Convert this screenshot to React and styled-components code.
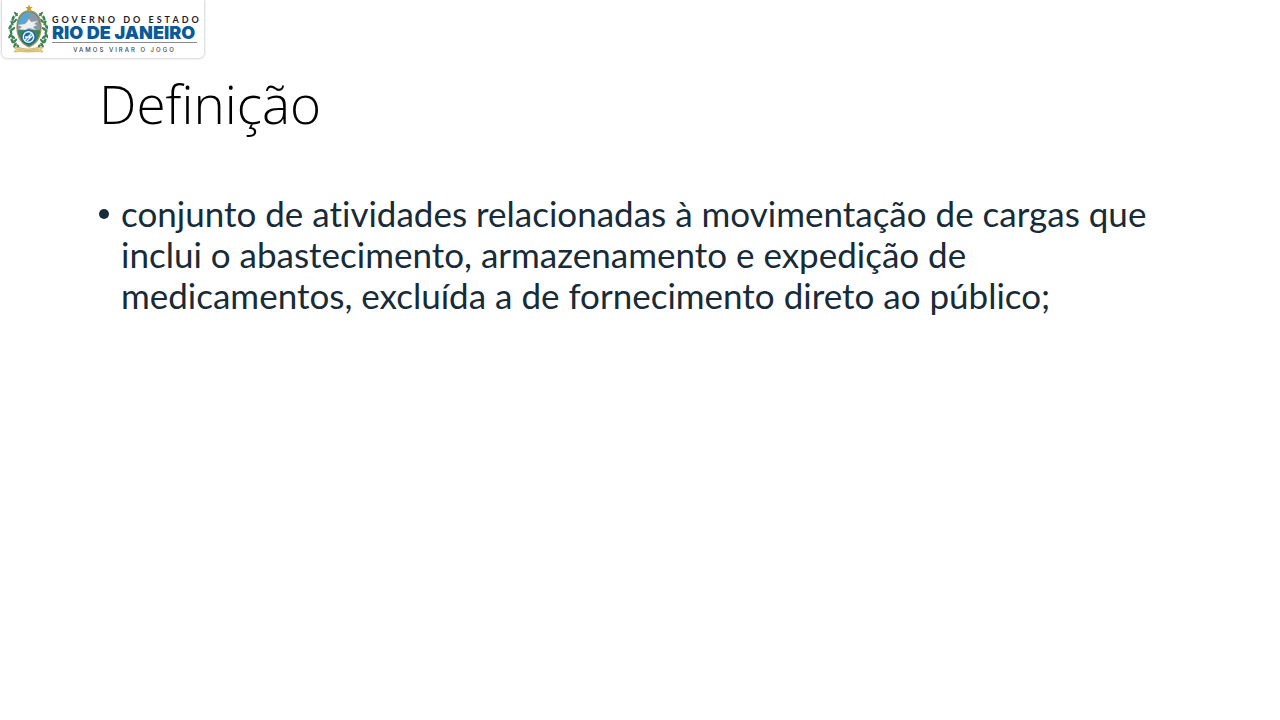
import React from "react";
import styled, { createGlobalStyle } from "styled-components";

const GlobalStyle = createGlobalStyle`
  *, *::before, *::after { box-sizing: border-box; }
  body { margin: 0; background: #fff; }
`;

const Slide = styled.div`
  min-height: 100vh;
  background: #fff;
  font-family: Lato, "Liberation Sans", sans-serif;
  font-variant-ligatures: none;
`;

const Brand = styled.header`
  display: flex;
  align-items: flex-start;
  gap: 4px;
  width: fit-content;
  height: 58px;
  margin-left: 2px;
  padding: 4px 7px 0 6px;
  background: #fff;
  border-radius: 0 0 5px 5px;
  box-shadow: 0 0 3px rgba(0, 0, 0, 0.35);
`;

const Crest = styled.svg`
  display: block;
  width: 40px;
  height: 50px;
  flex: none;
`;

const BrandText = styled.div`
  display: flex;
  flex-direction: column;
  width: 145px;
  padding-top: 10px;
  font-family: Inter, "Liberation Sans", sans-serif;
  white-space: nowrap;
`;

const Government = styled.span`
  font-family: Lato, "Liberation Sans", sans-serif;
  font-size: 9px;
  line-height: 11px;
  font-weight: 700;
  letter-spacing: 3px;
  color: #1d1d1f;
`;

const StateName = styled.strong`
  font-size: 18px;
  line-height: 15px;
  font-weight: 900;
  color: #075b99;
`;

const Motto = styled.span`
  margin-top: 2px;
  padding-top: 2px;
  border-top: 1px solid #8b8b8b;
  font-size: 6px;
  line-height: 9px;
  font-weight: 500;
  letter-spacing: 2px;
  text-align: center;
  color: #444;
`;

const Content = styled.main`
  padding: 12px 92px 0 99px;
`;

const Title = styled.h1`
  margin: 0;
  font-family: "Open Sans", "Liberation Sans", sans-serif;
  font-size: 53px;
  line-height: 68px;
  font-weight: 300;
  color: #000;
`;

const Points = styled.ul`
  margin: 55px 0 0;
  padding: 0;
  list-style: none;
  color: #172b38;
  font-size: 35px;
  line-height: 41px;
`;

const Point = styled.li`
  display: flex;
  gap: 12px;
  &::before {
    content: "";
    flex: none;
    width: 10px;
    height: 10px;
    margin-top: 16px;
    border-radius: 50%;
    background: currentColor;
  }
`;

const leaves = [
  [8, 10, -40], [5, 14, 20], [4, 19, -25], [2, 23, 25], [3, 28, -20],
  [2, 32, 30], [4, 37, -25], [7, 41, 35], [10, 43, -10], [7, 17, 45],
  [5, 25, 50], [5, 33, -50], [7, 37, 45],
];

function LaurelSide() {
  return (
    <g>
      <path d="M10 9C1 18 0 35 11 44" fill="none" stroke="#38754d" strokeWidth=".8" />
      {leaves.map(([x, y, angle]) => (
        <ellipse key={`${x}-${y}`} cx={x} cy={y} rx="1.2" ry="2.7" fill="#3c8356"
          transform={`rotate(${angle} ${x} ${y})`} />
      ))}
    </g>
  );
}

function StateCrest() {
  return (
    <Crest viewBox="0 0 40 50" role="img" aria-label="Brasão do Estado do Rio de Janeiro">
      <LaurelSide />
      <g transform="translate(41 0) scale(-1 1)"><LaurelSide /></g>
      <path d="M21 7C14 7 9 13 9 23c0 10 5 17 12 20 7-3 12-10 12-20 0-10-5-16-12-16Z"
        fill="#1e72a9" stroke="#a99544" strokeWidth="1.3" />
      <path d="M21 8c-6 0-11 6-11 14v4h22v-4C32 14 27 8 21 8Z" fill="#8997a6" />
      <path d="M10 20c1-7 5-12 11-12v5l-5 6-6 3Z" fill="#58a5cf" />
      <path d="M10 26h22c-1 7-4 12-11 16-7-4-10-9-11-16Z" fill="#3e8657" />
      <path d="m21 15 2 3 7-1-4 3 3 1-4 2 3 3-7-2-4 2-6-1 3-2-4-2 7-1 2-2Z"
        fill="#edf0ef" stroke="#c1c8ca" strokeWidth=".3" />
      <circle cx="20.5" cy="33" r="7.5" fill="#176ca7" />
      <circle cx="20.5" cy="33" r="5.2" fill="none" stroke="#f3f7f7" strokeWidth="1.4" />
      <path d="m17 36 7-7m-5 8 6-6m-8 2h6" stroke="#f3f7f7" strokeWidth="1.3" />
      <path d="m21 .5 1.1 2.4 2.7.2-2 1.7.7 2.7L21 6.1l-2.4 1.4.7-2.7-2.1-1.7 2.7-.2Z"
        fill="#c2a135" />
      <path d="M6 43.5c5-1 8 1.5 14 1.5s10-2.5 15-1.5l-2 2 2 2.5c-5-1-9 0-15 0S10 47 6 48l2-2.5Z"
        fill="#e7d494" stroke="#c6a64f" strokeWidth=".7" />
      <path d="M10 45.7c4 0 6 1 10 1s7-1 11-1" fill="none" stroke="#aa9143" strokeWidth=".7" strokeDasharray="1 .6" />
    </Crest>
  );
}

export default function App() {
  return (
    <Slide lang="pt-BR">
      <GlobalStyle />
      <Brand>
        <StateCrest />
        <BrandText>
          <Government>GOVERNO DO ESTADO</Government>
          <StateName>RIO DE JANEIRO</StateName>
          <Motto>VAMOS VIRAR O JOGO</Motto>
        </BrandText>
      </Brand>
      <Content>
        <Title>Definição</Title>
        <Points>
          <Point>
            conjunto de atividades relacionadas à movimentação de cargas que inclui o
            abastecimento, armazenamento e expedição de medicamentos, excluída a de
            fornecimento direto ao público;
          </Point>
        </Points>
      </Content>
    </Slide>
  );
}
